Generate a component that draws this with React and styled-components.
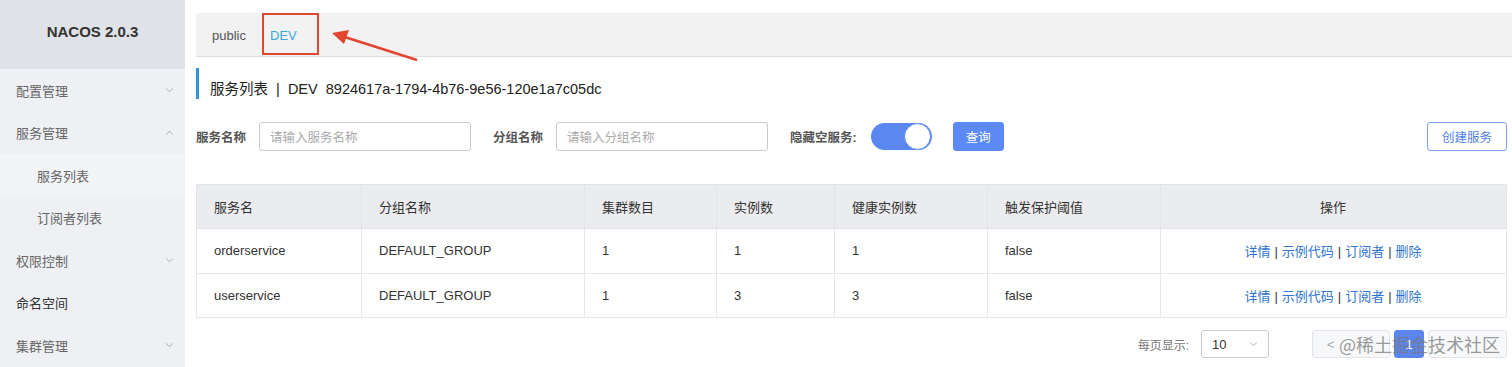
import React from "react";
import styled, { createGlobalStyle } from "styled-components";

const Global = createGlobalStyle`
  html, body { margin: 0; padding: 0; background: #fff; }
  body { font-family: "Liberation Sans", Arial, "Noto Sans CJK SC", sans-serif; color: #333; }
  * { box-sizing: border-box; }
`;

const Page = styled.div`
  display: flex;
  width: 1512px;
  height: 367px;
  overflow: hidden;
  position: relative;
`;

const Sidebar = styled.aside`
  width: 185px;
  flex: none;
  background: #eef0f3;
  display: flex;
  flex-direction: column;
`;

const Brand = styled.div`
  height: 69px;
  background: #dfe2e6;
  display: flex;
  align-items: center;
  justify-content: center;
  font-weight: bold;
  font-size: 15px;
  color: #333;
  padding-bottom: 6px;
`;

const MenuItem = styled.div`
  height: 42.5px;
  display: flex;
  align-items: center;
  justify-content: space-between;
  padding: 0 11px 0 ${(p) => (p.$sub ? 37 : 16)}px;
  font-size: 13px;
  color: ${(p) => (p.$strong ? "#333" : "#666")};
  background: ${(p) => (p.$active ? "#f3f4f6" : "transparent")};
`;

const Chevron = ({ up }) => (
  <svg width="9" height="5" viewBox="0 0 10 6" fill="none" stroke="#9a9a9a" strokeWidth="1">
    {up ? <path d="M1 5.5L5 1.5L9 5.5" /> : <path d="M1 0.5L5 4.5L9 0.5" />}
  </svg>
);

const Main = styled.main`
  flex: 1;
  display: flex;
  flex-direction: column;
  padding: 13px 0 0 11px;
  position: relative;
`;

const TabBar = styled.div`
  height: 44px;
  background: #f2f2f3;
  border-bottom: 1px solid #dcdee2;
  display: flex;
  align-items: stretch;
`;

const Tab = styled.div`
  display: flex;
  align-items: center;
  font-size: 13px;
  padding-top: 2px;
  color: ${(p) => (p.$active ? "#37a9d9" : "#555")};
  width: ${(p) => p.$w}px;
  border: ${(p) => (p.$marked ? "2px solid #e2462f" : "none")};
  height: ${(p) => (p.$marked ? "42px" : "auto")};
  justify-content: ${(p) => (p.$marked ? "flex-start" : "center")};
  padding-left: ${(p) => (p.$marked ? "6px" : "0")};
`;

const Title = styled.div`
  margin-top: 11px;
  height: 31px;
  border-left: 3px solid #3393d4;
  padding-left: 11px;
  display: flex;
  align-items: center;
  padding-top: 8px;
  font-size: 14.5px;
  color: #222;
  white-space: pre;
`;

const SearchRow = styled.div`
  margin-top: 23px;
  height: 28px;
  display: flex;
  align-items: center;
  margin-right: 5px;
`;

const Label = styled.span`
  font-size: 12.5px;
  font-weight: bold;
  color: #555;
  margin-right: ${(p) => p.$mr}px;
  margin-left: ${(p) => p.$ml || 0}px;
`;

const Input = styled.div`
  width: 212px;
  height: 29px;
  border: 1px solid #c9ccd2;
  border-radius: 3px;
  display: flex;
  align-items: center;
  padding-left: 10px;
  font-size: 12.5px;
  color: #aaa;
`;

const Switch = styled.div`
  width: 61px;
  height: 27px;
  border-radius: 14px;
  background: #5b87f0;
  display: flex;
  justify-content: flex-end;
  align-items: center;
  padding: 0 1px;
  &::after {
    content: "";
    width: 25px;
    height: 25px;
    border-radius: 50%;
    background: #fff;
    border: 1px solid #5b87f0;
  }
`;

const Button = styled.div`
  height: 29px;
  padding: 0 ${(p) => p.$px}px;
  border-radius: 3px;
  display: flex;
  align-items: center;
  font-size: 12.5px;
  background: ${(p) => (p.$primary ? "#5b8af5" : "#fff")};
  color: ${(p) => (p.$primary ? "#fff" : "#4f7fe8")};
  border: 1px solid ${(p) => (p.$primary ? "#5b8af5" : "#7ba0f0")};
  margin-left: ${(p) => p.$ml || 0}px;
`;

const Spacer = styled.div`flex: 1;`;

const Table = styled.table`
  margin-top: 34px;
  width: 1311px;
  border-collapse: collapse;
  font-size: 13px;
  table-layout: fixed;
`;

const Th = styled.th`
  height: 44px;
  background: #ebecef;
  border: 1px solid #e1e3e7;
  font-weight: normal;
  text-align: ${(p) => (p.$center ? "center" : "left")};
  padding-left: ${(p) => (p.$center ? 0 : 17)}px;
  color: #333;
  width: ${(p) => p.$w}px;
`;

const Td = styled.td`
  height: 44.5px;
  border: 1px solid #e6e7eb;
  text-align: ${(p) => (p.$center ? "center" : "left")};
  padding-left: ${(p) => (p.$center ? 0 : 17)}px;
  color: #333;
`;

const Link = styled.a`
  color: #2f74d0;
  text-decoration: none;
`;

const Sep = styled.span`
  color: #333;
  margin: 0 4px;
`;

const Pager = styled.div`
  margin-top: 12px;
  display: flex;
  align-items: center;
  justify-content: flex-end;
  margin-right: 5px;
  height: 28px;
  position: relative;
`;

const PagerLabel = styled.span`
  font-size: 12px;
  color: #777;
  margin-right: 12px;
`;

const Select = styled.div`
  width: 68px;
  height: 28px;
  border: 1px solid #c9ccd2;
  border-radius: 3px;
  display: flex;
  align-items: center;
  justify-content: space-between;
  padding: 0 10px;
  font-size: 13px;
  color: #333;
  margin-right: 43px;
`;

const PageBtn = styled.div`
  height: 28px;
  width: ${(p) => p.$w}px;
  border-radius: 3px;
  border: 1px solid ${(p) => (p.$active ? "#5b86f0" : "#e3e5e9")};
  background: ${(p) => (p.$active ? "#5b86f0" : "#f7f8fa")};
  color: ${(p) => (p.$active ? "#fff" : "#aaa")};
  display: flex;
  align-items: center;
  padding-left: ${(p) => (p.$active ? 0 : 14)}px;
  justify-content: ${(p) => (p.$active ? "center" : "flex-start")};
  font-size: 13px;
  margin-left: ${(p) => p.$ml || 0}px;
`;

const Watermark = styled.div`
  position: absolute;
  right: 7px;
  top: 50%;
  transform: translateY(-50%);
  font-size: 18px;
  color: rgba(120, 120, 120, 0.75);
  font-family: "Noto Sans CJK SC", sans-serif;
  pointer-events: none;
`;

const ArrowLayer = styled.svg`
  position: absolute;
  left: 0;
  top: 0;
  pointer-events: none;
`;

const menu = [
  { t: "配置管理", c: "down" },
  { t: "服务管理", c: "up" },
  { t: "服务列表", sub: true, active: true },
  { t: "订阅者列表", sub: true },
  { t: "权限控制", c: "down" },
  { t: "命名空间", strong: true },
  { t: "集群管理", c: "down" },
];

const rows = [
  ["orderservice", "DEFAULT_GROUP", "1", "1", "1", "false"],
  ["userservice", "DEFAULT_GROUP", "1", "3", "3", "false"],
];

const cols = [
  ["服务名", 165],
  ["分组名称", 223],
  ["集群数目", 132],
  ["实例数", 118],
  ["健康实例数", 153],
  ["触发保护阈值", 173],
];

export default function App() {
  return (
    <Page>
      <Global />
      <Sidebar>
        <Brand>NACOS 2.0.3</Brand>
        {menu.map((m) => (
          <MenuItem key={m.t} $sub={m.sub} $active={m.active} $strong={m.strong}>
            <span>{m.t}</span>
            {m.c && <Chevron up={m.c === "up"} />}
          </MenuItem>
        ))}
      </Sidebar>
      <Main>
        <TabBar>
          <Tab $w={66}>public</Tab>
          <Tab $w={57} $active $marked>DEV</Tab>
        </TabBar>
        <Title>服务列表  |  DEV  8924617a-1794-4b76-9e56-120e1a7c05dc</Title>
        <SearchRow>
          <Label $mr={13}>服务名称</Label>
          <Input>请输入服务名称</Input>
          <Label $ml={22} $mr={13}>分组名称</Label>
          <Input>请输入分组名称</Input>
          <Label $ml={22} $mr={14}>隐藏空服务:</Label>
          <Switch />
          <Button $primary $px={12} $ml={21}>查询</Button>
          <Spacer />
          <Button $px={14}>创建服务</Button>
        </SearchRow>
        <Table>
          <thead>
            <tr>
              {cols.map(([c, w]) => (
                <Th key={c} $w={w}>{c}</Th>
              ))}
              <Th $center>操作</Th>
            </tr>
          </thead>
          <tbody>
            {rows.map((r) => (
              <tr key={r[0]}>
                {r.map((v, i) => (
                  <Td key={i}>{v}</Td>
                ))}
                <Td $center>
                  <Link>详情</Link>
                  <Sep>|</Sep>
                  <Link>示例代码</Link>
                  <Sep>|</Sep>
                  <Link>订阅者</Link>
                  <Sep>|</Sep>
                  <Link>删除</Link>
                </Td>
              </tr>
            ))}
          </tbody>
        </Table>
        <Pager>
          <PagerLabel>每页显示:</PagerLabel>
          <Select>
            <span>10</span>
            <Chevron />
          </Select>
          <PageBtn $w={78}>&lt;</PageBtn>
          <PageBtn $w={30} $active $ml={4}>1</PageBtn>
          <PageBtn $w={79} $ml={4}></PageBtn>
          <Watermark>@稀土掘金技术社区</Watermark>
        </Pager>
        <ArrowLayer width="300" height="80" viewBox="185 0 300 80">
          <line x1="417" y1="60" x2="340" y2="35.5" stroke="#e2462f" strokeWidth="2.5" />
          <polygon points="332,33 349,30 344,44" fill="#e2462f" />
        </ArrowLayer>
      </Main>
    </Page>
  );
}
